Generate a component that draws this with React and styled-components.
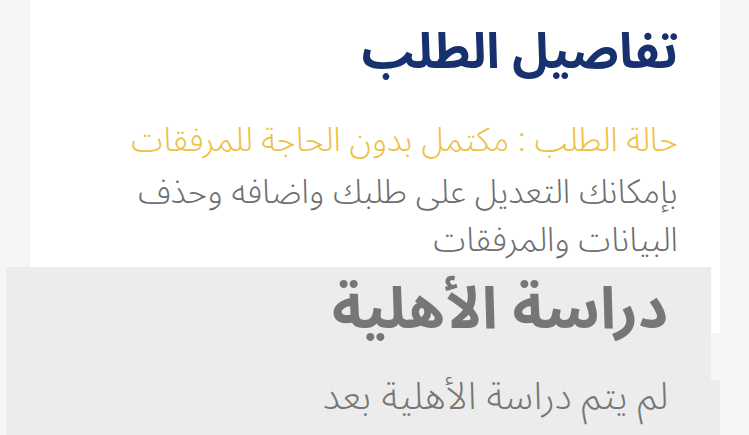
import React from "react";
import styled, { createGlobalStyle } from "styled-components";

const GlobalStyle = createGlobalStyle`
    html, body {
        margin: 0;
        padding: 0;
        background: #f6f6f6;
    }
    * {
        box-sizing: border-box;
    }
`;

const App = () => {
    return (
        <Page dir="rtl">
            <GlobalStyle />
            <Card>
                <Title>تفاصيل الطلب</Title>
                <Status>حالة الطلب : مكتمل بدون الحاجة للمرفقات</Status>
                <Note>بإمكانك التعديل على طلبك واضافه وحذف البيانات والمرفقات</Note>
            </Card>
            <SectionHead>
                <SectionTitle>دراسة الأهلية</SectionTitle>
            </SectionHead>
            <SectionBody>
                <SectionText>لم يتم دراسة الأهلية بعد</SectionText>
            </SectionBody>
        </Page>
    );
};

const Page = styled.div`
    width: 749px;
    height: 435px;
    display: flex;
    flex-direction: column;
    font-family: "Noto Sans Arabic", "DejaVu Sans", sans-serif;
`;

const Card = styled.div`
    margin: 0 29px 0 30px;
    height: 333px;
    flex-shrink: 0;
    background: #ffffff;
    padding: 22px 42px 0 0;
`;

const Title = styled.h1`
    margin: 0;
    font-size: 49px;
    font-weight: 700;
    line-height: 62px;
    color: #17306e;
`;

const Status = styled.p`
    margin: 37px 0 0;
    font-size: 33px;
    font-weight: 300;
    line-height: 40px;
    color: #eec13f;
`;

const Note = styled.p`
    margin: 8px 0 0;
    width: 565px;
    font-size: 33.5px;
    font-weight: 300;
    line-height: 48px;
    color: #6e6e70;
`;

const SectionHead = styled.div`
    margin: -66px 38px 0 6px;
    height: 113px;
    flex-shrink: 0;
    background: #ececec;
    padding: 13px 43px 0 0;
`;

const SectionTitle = styled.h2`
    margin: 0;
    font-size: 58px;
    font-weight: 700;
    line-height: 60px;
    color: #767678;
`;

const SectionBody = styled.div`
    margin: 0 29px 0 6px;
    flex: 1;
    min-height: 0;
    background: #ececec;
    padding: 0 52px 0 0;
`;

const SectionText = styled.p`
    margin: -10px 0 0;
    font-size: 38px;
    font-weight: 300;
    line-height: 54px;
    color: #767678;
`;

export default App;
